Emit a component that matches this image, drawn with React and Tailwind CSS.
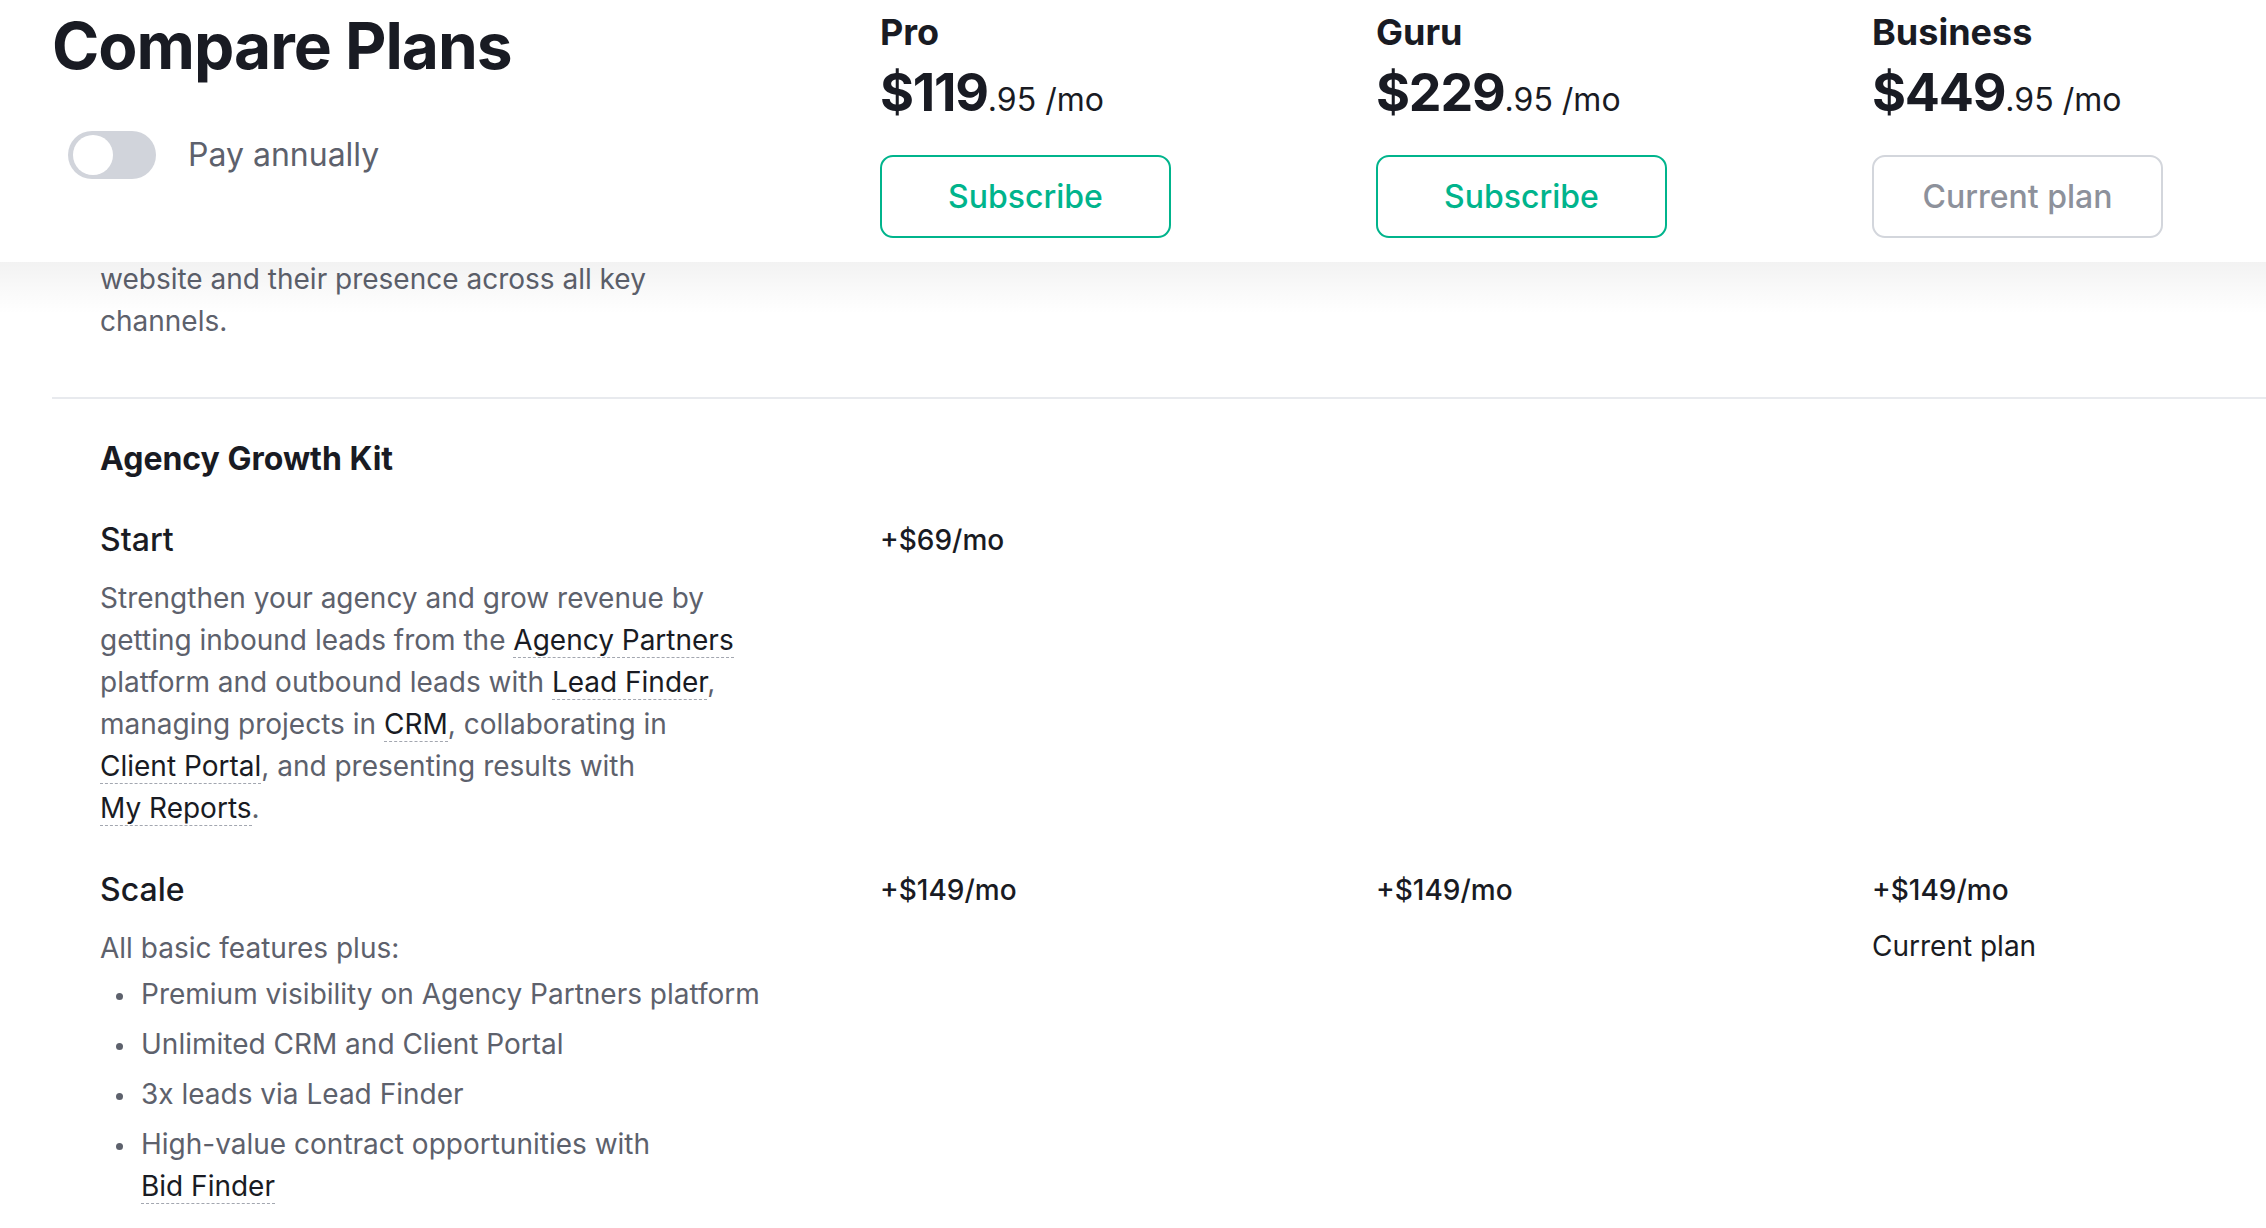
import { useState } from 'react'

const PLANS = [
  { name: 'Pro', dollars: '$119', cents: '.95', current: false },
  { name: 'Guru', dollars: '$229', cents: '.95', current: false },
  { name: 'Business', dollars: '$449', cents: '.95', current: true },
]

const COLS = 'grid grid-cols-[828px_496px_496px_1fr]'

// inline link with the dotted underline used across the feature descriptions
const Term = ({ children }) => (
  <span className="whitespace-nowrap border-b border-dashed border-[#a3a7b0] text-[#191b23]">{children}</span>
)

function Toggle({ on, onChange }) {
  return (
    <button
      role="switch"
      aria-checked={on}
      onClick={() => onChange(!on)}
      className={`flex h-[48px] w-[88px] shrink-0 items-center rounded-full p-[4px] ${on ? 'bg-[#00b48c]' : 'bg-[#d1d4db]'}`}
    >
      <span className={`h-[40px] w-[40px] rounded-full bg-white ${on ? 'ml-auto' : 'ml-[1px]'}`} />
    </button>
  )
}

function PlanHeader({ plan }) {
  return (
    <div className="pt-[10px]">
      <div className="text-[36px] font-bold leading-[44px]">{plan.name}</div>
      <div className="mt-[9px] flex items-baseline leading-[60px]">
        <span className="text-[52px] font-bold tracking-[-1.2px]">{plan.dollars}</span>
        <span className="text-[32px] leading-none">{plan.cents} /mo</span>
      </div>
      {plan.current ? (
        <button className="mt-[32px] h-[83px] w-[291px] rounded-[13px] border-2 border-[#d3d6dc] text-[32px] font-medium text-[#8d919b]">
          Current plan
        </button>
      ) : (
        <button className="mt-[32px] h-[83px] w-[291px] rounded-[13px] border-2 border-[#00b48c] text-[32px] font-medium text-[#00b48c]">
          Subscribe
        </button>
      )}
    </div>
  )
}

function AddonRow({ title, prices, note, children, className = '' }) {
  return (
    <div className={`${COLS} ${className}`}>
      <div className="pl-[48px]">
        <div className="text-[32px] font-medium leading-[48px]">{title}</div>
        <div className="mt-[13px] max-w-[664px] text-[28px] leading-[42px] text-[#5d616c]">{children}</div>
      </div>
      {prices.map((p, i) => (
        <div key={i} className="text-[28px]">
          {p && <div className="font-medium leading-[48px]">{p}</div>}
          {p && i === 2 && note && <div className="mt-[11px] leading-[42px]">{note}</div>}
        </div>
      ))}
    </div>
  )
}

export default function App() {
  const [annual, setAnnual] = useState(false)

  return (
    <div className="min-h-screen bg-white font-['Inter',sans-serif] text-[#191b23]">
      <header className="relative z-10 bg-white">
        <div className={`${COLS} pb-[24px] pl-[52px]`}>
          <div className="pt-[10px]">
            <h1 className="text-[64px] font-bold leading-[72px] tracking-[-1px]">Compare Plans</h1>
            <div className="ml-[16px] mt-[49px] flex items-center gap-[32px]">
              <Toggle on={annual} onChange={setAnnual} />
              <span className="text-[32px] leading-[48px] text-[#5d616c]">Pay annually</span>
            </div>
          </div>
          {PLANS.map((plan) => (
            <PlanHeader key={plan.name} plan={plan} />
          ))}
        </div>
        <div className="pointer-events-none absolute inset-x-0 top-full h-[52px] bg-gradient-to-b from-black/[0.05] to-transparent" />
      </header>

      <main className="pl-[52px] pb-[40px]">
        {/* tail of the previous section, scrolled under the header */}
        <div className="-mt-[4px] mb-[55px] max-w-[712px] pl-[48px] text-[28px] leading-[42px] text-[#5d616c]">
          website and their presence across all key channels.
        </div>

        <div className="h-[2px] bg-[#e8eaee]" />

        <h2 className="pl-[48px] pt-[36px] text-[32px] font-bold leading-[48px]">Agency Growth Kit</h2>

        <AddonRow className="mt-[33px]" title="Start" prices={['+$69/mo', null, null]}>
          Strengthen your agency and grow revenue by getting inbound leads from the <Term>Agency Partners</Term>{' '}
          platform and outbound leads with <Term>Lead Finder</Term>, managing projects in <Term>CRM</Term>, collaborating
          in <Term>Client Portal</Term>, and presenting results with <Term>My Reports</Term>.
        </AddonRow>

        <AddonRow
          className="mt-[37px]"
          title="Scale"
          prices={['+$149/mo', '+$149/mo', '+$149/mo']}
          note="Current plan"
        >
          <p>All basic features plus:</p>
          <ul className="mt-[4px] flex flex-col gap-[8px]">
            {[
              'Premium visibility on Agency Partners platform',
              'Unlimited CRM and Client Portal',
              '3x leads via Lead Finder',
            ].map((item) => (
              <li key={item} className="flex items-start">
                <span className="ml-[16px] mr-[18px] mt-[20px] h-[7px] w-[7px] shrink-0 rounded-full bg-[#5d616c]" />
                <span>{item}</span>
              </li>
            ))}
            <li className="flex items-start">
              <span className="ml-[16px] mr-[18px] mt-[20px] h-[7px] w-[7px] shrink-0 rounded-full bg-[#5d616c]" />
              <span>
                High-value contract opportunities with <Term>Bid Finder</Term>
              </span>
            </li>
          </ul>
        </AddonRow>
      </main>
    </div>
  )
}
